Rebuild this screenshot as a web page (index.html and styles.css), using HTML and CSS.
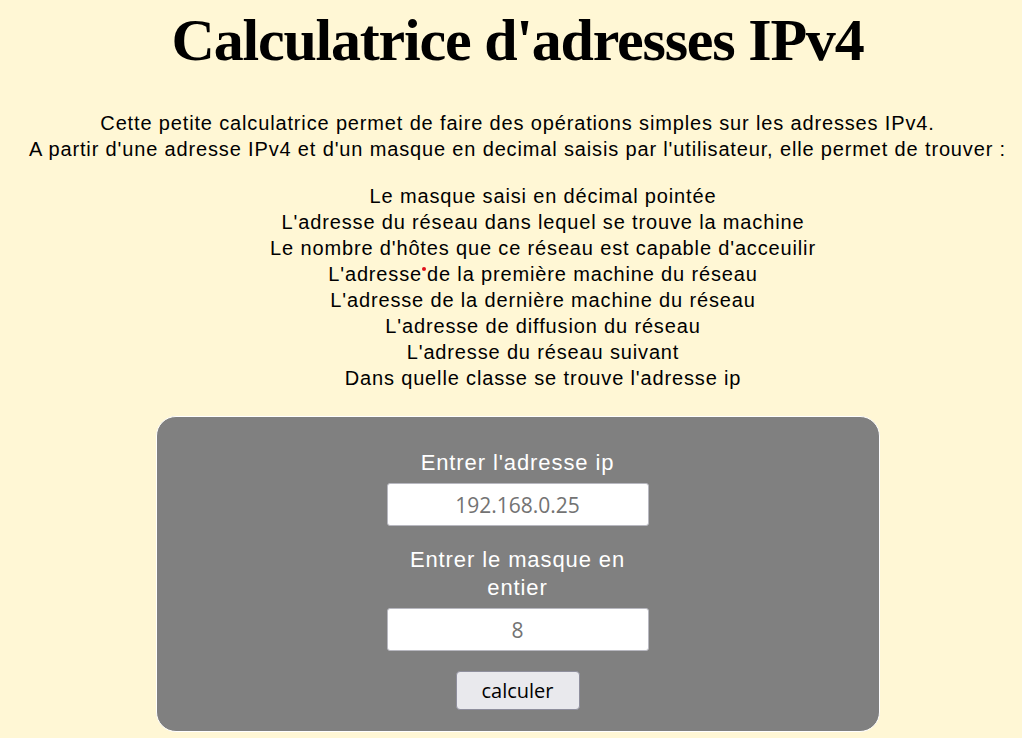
FILE: index.html
```html
<!DOCTYPE html>
<html lang="fr">
<head>
<meta charset="utf-8">
<title>Calculatrice d'adresses IPv4</title>
<link rel="stylesheet" href="styles.css">
</head>
<body>
<main class="page">
  <h1 class="title">Calculatrice d'adresses IPv4</h1>
  <p class="intro">Cette petite calculatrice permet de faire des opérations simples sur les adresses IPv4.<br>A partir d'une adresse IPv4 et d'un masque en decimal saisis par l'utilisateur, elle permet de trouver :</p>
  <ul class="features">
    <li>Le masque saisi en décimal pointée</li>
    <li>L'adresse du réseau dans lequel se trouve la machine</li>
    <li>Le nombre d'hôtes que ce réseau est capable d'acceuilir</li>
    <li>L'adresse<span class="dot"></span>de la première machine du réseau</li>
    <li>L'adresse de la dernière machine du réseau</li>
    <li>L'adresse de diffusion du réseau</li>
    <li>L'adresse du réseau suivant</li>
    <li>Dans quelle classe se trouve l'adresse ip</li>
  </ul>
  <form class="card">
    <div class="fields">
      <label class="label" for="ip">Entrer l'adresse ip</label>
      <input class="field" id="ip" type="text" placeholder="192.168.0.25">
      <label class="label" for="mask">Entrer le masque en entier</label>
      <input class="field" id="mask" type="text" placeholder="8">
      <button class="btn" type="button">calculer</button>
    </div>
  </form>
</main>
</body>
</html>
```
FILE: styles.css
```css
html, body {
  margin: 0;
  padding: 0;
  background: #fff7d5;
}
body {
  padding-left: 13px;
  font-family: "Liberation Sans", Arial, sans-serif;
  color: #000;
}
.page {
  text-align: center;
}
.title {
  font-family: "Liberation Serif", "Times New Roman", serif;
  font-weight: bold;
  font-size: 60px;
  line-height: 60px;
  letter-spacing: -1.2px;
  margin: 10px 0 0;
}
.intro {
  font-size: 20px;
  line-height: 26px;
  letter-spacing: 0.85px;
  margin: 40px 0 0;
}
.features {
  list-style: none;
  padding: 0 0 0 51px;
  margin: 21px 0 0;
  font-size: 20px;
  line-height: 26px;
  letter-spacing: 0.85px;
}
.dot {
  display: inline-block;
  width: 4px;
  height: 4px;
  border-radius: 50%;
  background: #e0101a;
  vertical-align: 10px;
  margin: 0 1px 0 0;
}
.card {
  width: 724px;
  height: 316px;
  margin: 25px auto 0;
  background: #808080;
  border: 1px solid #ffffff;
  border-radius: 20px;
  padding: 32px 0 0;
  box-sizing: border-box;
}
.fields {
  width: 262px;
  margin: 0 auto;
  display: flex;
  flex-direction: column;
  align-items: center;
}
.label {
  font-family: "Liberation Sans", Arial, sans-serif;
  color: #fff;
  font-size: 22px;
  line-height: 28px;
  letter-spacing: 0.9px;
  display: block;
  width: 250px;
}
.field {
  width: 262px;
  height: 43px;
  box-sizing: border-box;
  margin: 6px 0 20px;
  border: 1px solid #b8b8c0;
  border-radius: 3px;
  background: #fff;
  text-align: center;
  font-family: "Open Sans", "Noto Sans", sans-serif;
  font-size: 21px;
  padding: 0;
}
.field::placeholder {
  color: #737373;
}
.btn {
  width: 124px;
  height: 39px;
  margin-top: 0;
  background: #e9e9ed;
  border: 1px solid #8f8f9d;
  border-radius: 4px;
  font-family: "Open Sans", "Noto Sans", sans-serif;
  font-size: 20px;
  color: #000;
  padding: 0;
}
```
